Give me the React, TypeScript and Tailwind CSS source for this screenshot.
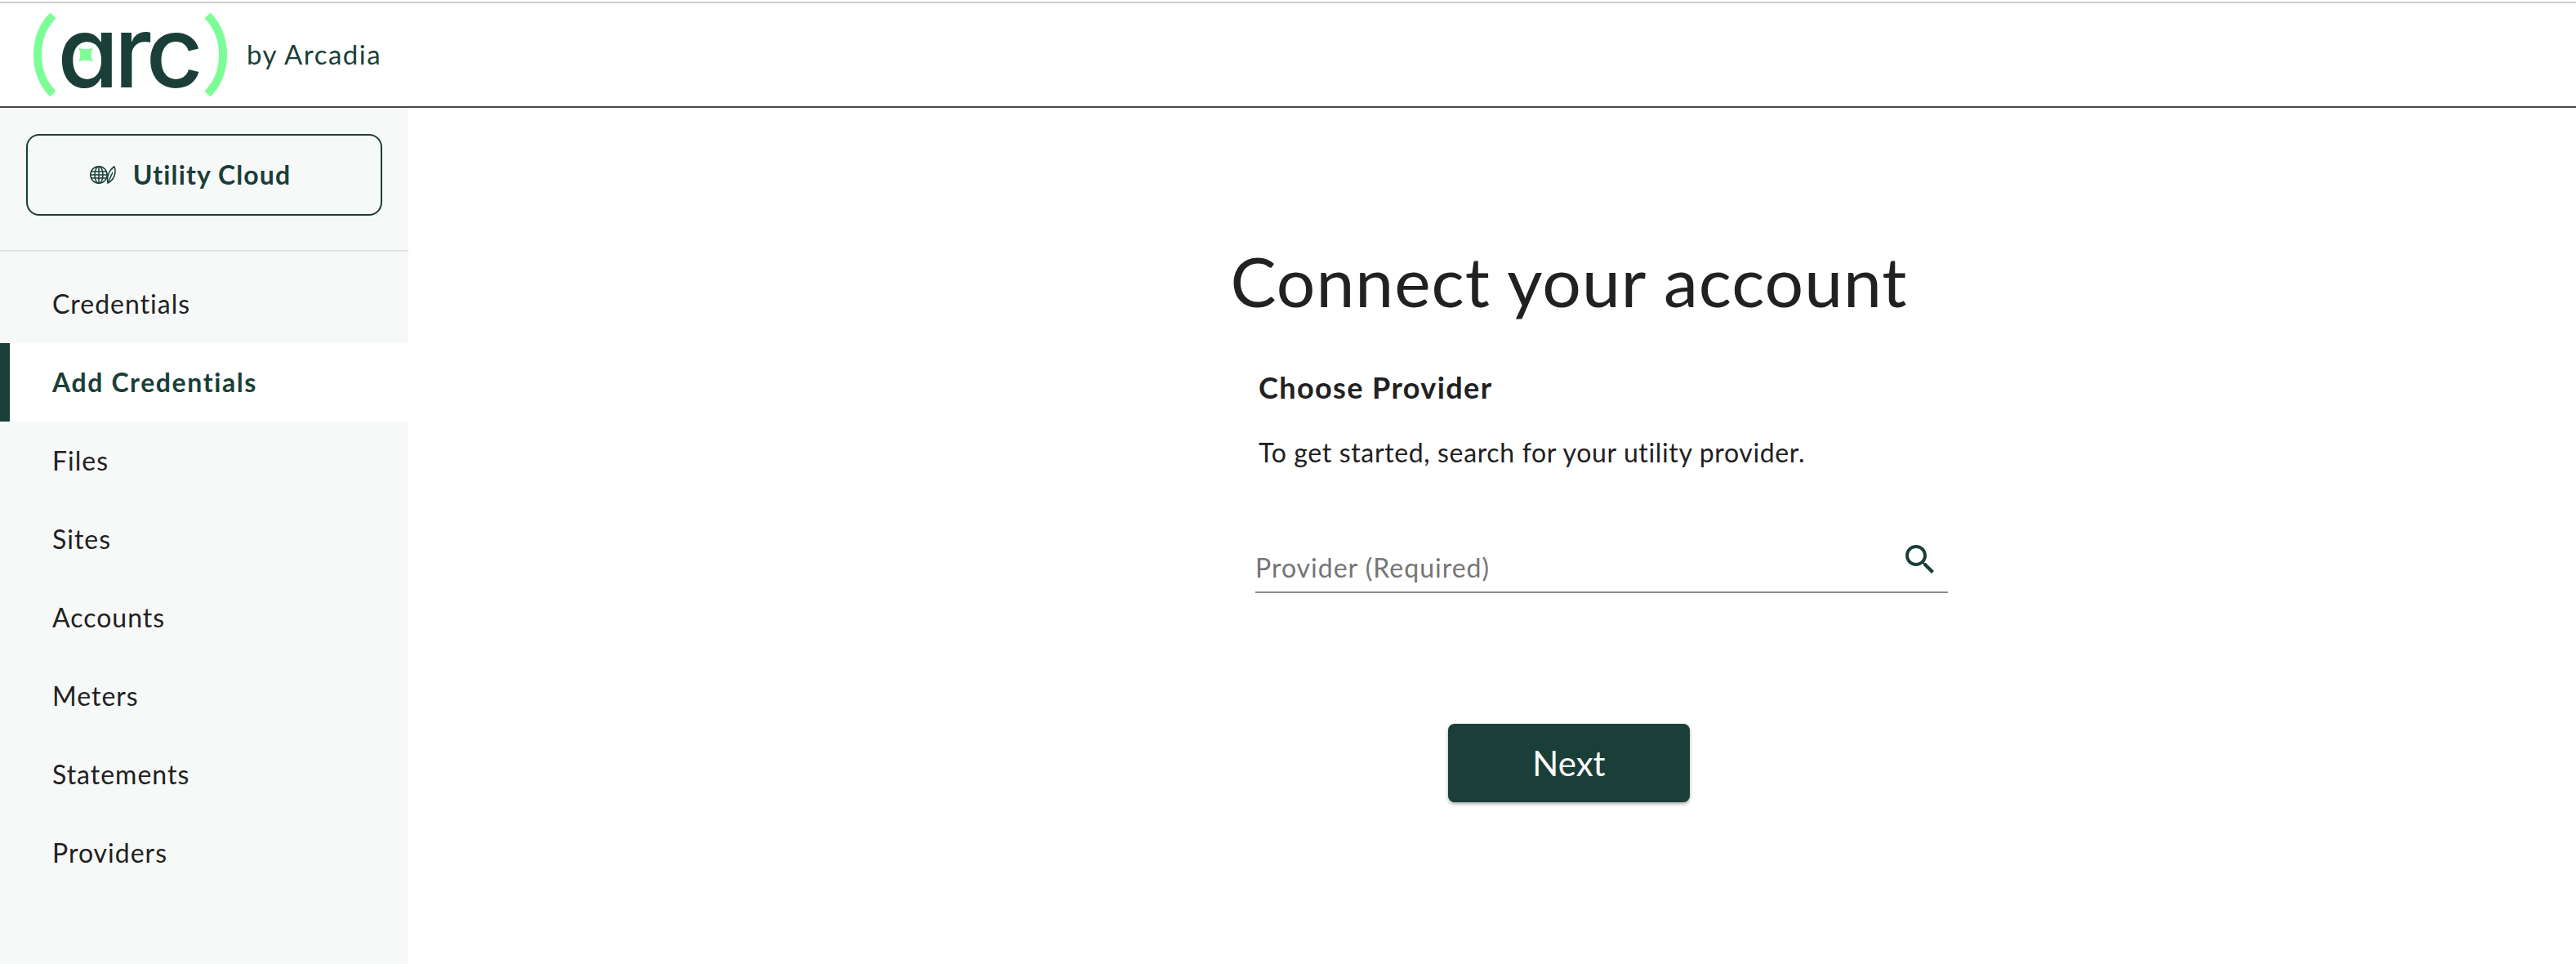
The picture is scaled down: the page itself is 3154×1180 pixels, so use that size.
const font = "font-['Lato','Liberation_Sans',sans-serif]";

const navItems = ['Credentials', 'Add Credentials', 'Files', 'Sites', 'Accounts', 'Meters', 'Statements', 'Providers'];

function ArcLogo() {
  return (
    <div className="relative flex h-[122px] w-[237px] shrink-0 items-center justify-center">
      <svg viewBox="0 0 237 104" className="absolute left-0 top-[9px] h-[104px] w-[237px]" fill="none">
        <path d="M24 4 C10 18 5 34 5 52 C5 70 10 86 24 100" stroke="#7dfd97" strokeWidth="10" />
        <path d="M213 4 C227 18 232 34 232 52 C232 70 227 86 213 100" stroke="#7dfd97" strokeWidth="10" />
      </svg>
      <span className="-mt-[8px] pr-[6px] font-['Inter',sans-serif] text-[122px] leading-[122px] font-[450] tracking-[-6px] whitespace-nowrap text-[#1a3f38]">ɑrc</span>
      <svg viewBox="0 0 18 18" className="absolute left-[55px] top-[52px] h-[18px] w-[18px]">
        <path d="M0 0 C5 3 13 3 18 0 C15 5 15 13 18 18 C13 15 5 15 0 18 C3 13 3 5 0 0 Z" fill="#7dfd97" />
      </svg>
    </div>
  );
}

function GlobeLeaf() {
  return (
    <svg viewBox="0 0 32 22" className="h-[22px] w-[32px]" fill="none" stroke="#1a3f38" strokeWidth="1.5">
      <circle cx="11" cy="11" r="10.2" />
      <ellipse cx="11" cy="11" rx="5" ry="10.2" />
      <path d="M1 7 H21 M1 11 H21 M1 15 H21 M11 1 V21" />
      <path d="M22 21 C29 18 33 9 30 1 C25 4 20 12 22 21 Z M22 21 L28 8" />
    </svg>
  );
}

function SearchIcon() {
  return (
    <svg viewBox="0 0 24 24" className="mt-[15px] h-[48px] w-[48px]" fill="#1a3f38">
      <path d="M15.5 14h-.79l-.28-.27C15.41 12.59 16 11.11 16 9.5 16 5.91 13.09 3 9.5 3S3 5.91 3 9.5 5.91 16 9.5 16c1.61 0 3.09-.59 4.23-1.57l.27.28v.79l5 4.99L20.49 19l-4.99-5zm-6 0C7.01 14 5 11.99 5 9.5S7.01 5 9.5 5 14 7.01 14 9.5 11.99 14 9.5 14z" />
    </svg>
  );
}

export default function App() {
  return (
    <div className={`${font} flex min-h-[1180px] flex-col bg-white pt-[2px]`}>
      <header className="flex h-[130px] items-center border-t-2 border-b-2 border-t-[#cfcfcf] border-b-[#4a4a4a] pl-[41px]">
        <ArcLogo />
        <span className="ml-[24px] text-[33px] tracking-[1.5px] text-[#1a3f38]">by Arcadia</span>
      </header>
      <div className="flex flex-1">
        <aside className="w-[500px] shrink-0 bg-[#f7f9f8]">
          <div className="border-b-2 border-[#dfe3e2] px-[32px] pt-[32px] pb-[42px]">
            <button className="flex h-[100px] w-full items-center justify-center gap-[21px] rounded-[16px] border-2 border-[#1a3f38] pr-[34px] text-[32px] font-bold tracking-[1.1px] text-[#1a3f38]">
              <GlobeLeaf />
              Utility Cloud
            </button>
          </div>
          <nav className="pt-[16px]">
            {navItems.map((item) =>
              item === 'Add Credentials' ? (
                <div key={item} className="flex h-[96px] items-center border-l-[12px] border-[#1a3f38] bg-white pl-[52px] text-[32px] font-bold tracking-[1.6px] text-[#1a3f38]">
                  {item}
                </div>
              ) : (
                <div key={item} className="flex h-[96px] items-center pl-[64px] text-[32px] tracking-[1px] text-[#212121]">
                  {item}
                </div>
              ),
            )}
          </nav>
        </aside>
        <main className="flex-1 pl-[936px]">
          <div className="flex w-[970px] flex-col items-center pt-[164px]">
            <h1 className="text-[84px] leading-[96px] tracking-[1px] text-[#212121]">Connect your account</h1>
            <div className="mt-[58px] w-full pl-[101px]">
              <h2 className="pl-[4px] text-[36px] leading-[48px] font-bold tracking-[1.4px] text-[#212121]">Choose Provider</h2>
              <p className="mt-[32px] pl-[4px] text-[32px] leading-[48px] tracking-[0.65px] text-[#212121]">To get started, search for your utility provider.</p>
              <div className="mt-[68px] flex h-[80px] w-[848px] items-start justify-between border-b-2 border-[#8c8c8c] pr-[10px]">
                <span className="pt-[25px] text-[32px] leading-[48px] tracking-[1px] text-[#757575]">Provider (Required)</span>
                <SearchIcon />
              </div>
            </div>
            <button className="mt-[160px] h-[96px] w-[296px] rounded-[8px] bg-[#1a3f38] text-[42px] text-white shadow-[0_2px_4px_rgba(0,0,0,0.35)]">Next</button>
          </div>
        </main>
      </div>
    </div>
  );
}
